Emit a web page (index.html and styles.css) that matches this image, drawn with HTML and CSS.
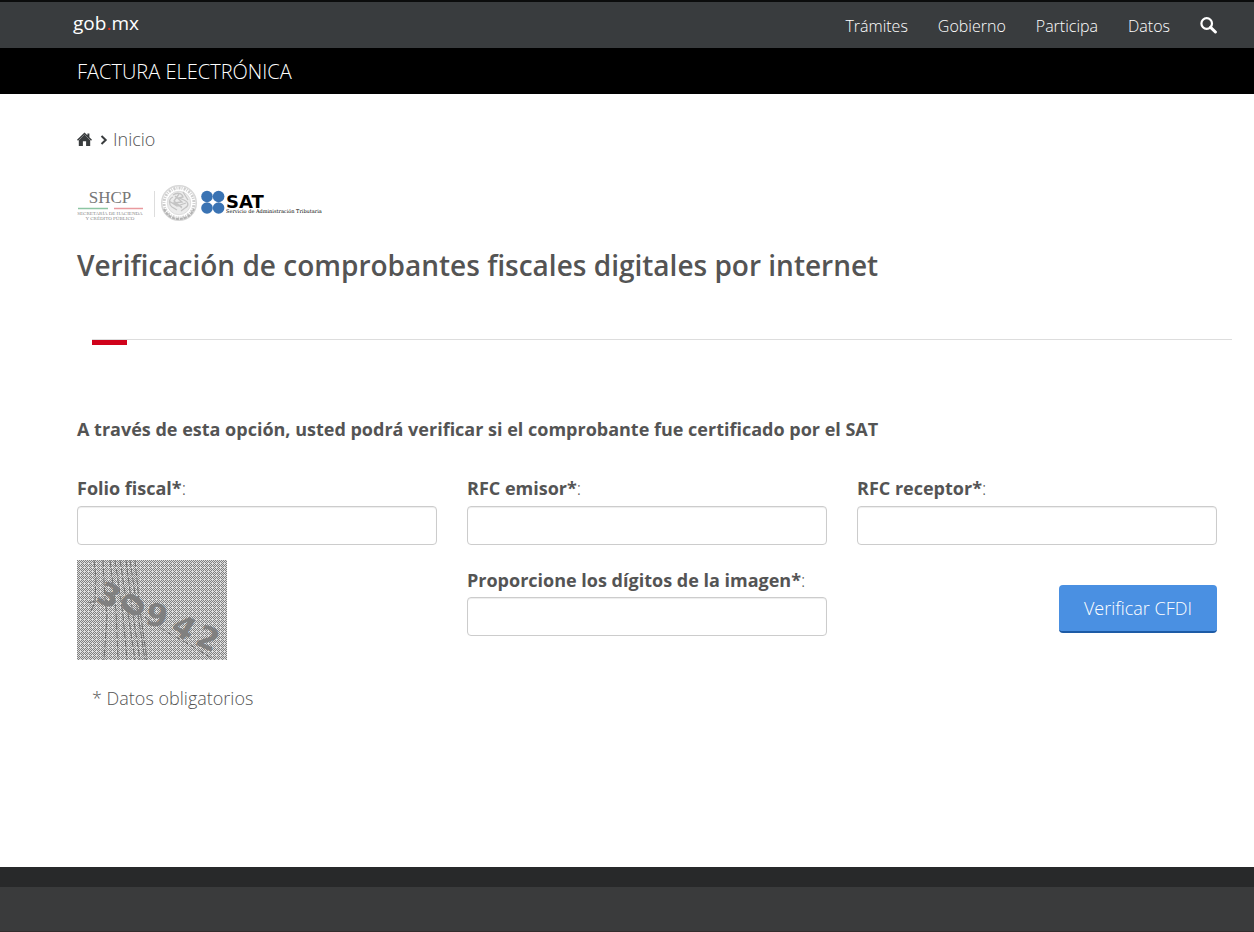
FILE: index.html
```html
<!DOCTYPE html>
<html lang="es">
<head>
<meta charset="utf-8">
<meta name="viewport" content="width=device-width, initial-scale=1">
<title>Verificación de comprobantes fiscales digitales por internet</title>
<link rel="stylesheet" href="styles.css">
</head>
<body>
<header>
  <div class="topbar container">
    <a class="brand" href="#">gob<span class="brand-dot">.</span>mx</a>
    <nav class="topnav">
      <a href="#">Trámites</a>
      <a href="#">Gobierno</a>
      <a href="#">Participa</a>
      <a href="#">Datos</a>
      <a class="search" href="#" aria-label="Buscar">
        <svg width="17" height="17" viewBox="0 0 17 17"><circle cx="6.7" cy="6.5" r="5.3" fill="none" stroke="#fff" stroke-width="2.2"/><path d="M10.6 10.4l4.8 4.6" stroke="#fff" stroke-width="3" stroke-linecap="round"/></svg>
      </a>
    </nav>
  </div>
  <div class="subbar container"><a href="#">FACTURA ELECTRÓNICA</a></div>
</header>

<main class="container">
  <nav class="breadcrumb">
    <a href="#" aria-label="Portada"><svg width="15" height="15" viewBox="0 0 15 15" fill="#393c3e"><path d="M7.500 .5L0 7.800l1 .9 6.500-6.200L14 8.700l1-.9-2.600-2.600V1.400h-2v1.900z"/><path d="M7.500 2.600L1.800 8.200V14h4.100V9.300h3.200V14h4.100V8.200z"/></svg></a>
    <svg class="chevron" width="8" height="10" viewBox="0 0 8 10"><path d="M1.500 1l4.200 4-4.200 4" fill="none" stroke="#393c3e" stroke-width="2"/></svg>
    <a href="#">Inicio</a>
  </nav>

  <svg class="logos" width="250" height="40" viewBox="0 0 250 40" role="img" aria-label="SHCP, SAT">
    <g class="shcp-text" text-anchor="middle">
      <text class="shcp-name" x="33" y="20">SHCP</text>
      <text class="shcp-sub" x="33" y="32">SECRETARÍA DE HACIENDA</text>
      <text class="shcp-sub" x="33" y="37">Y CRÉDITO PÚBLICO</text>
    </g>
    <path d="M1 25.500h30" stroke="#8dc5a3" stroke-width="1.500"/><path d="M37 25.500h29" stroke="#e99a9f" stroke-width="1.500"/>
    <path d="M77.500 8v26" stroke="#ddd"/>
    <g fill="none" stroke="#c4c4c4">
      <circle cx="102" cy="20" r="17.300" stroke="#d8d8d8" stroke-width="1.500"/>
      <circle cx="102" cy="20" r="15" stroke="#cfcfcf" stroke-width="3" stroke-dasharray="1 1.200 2 1"/>
      <circle cx="102" cy="20" r="11.700" fill="#ececec" stroke="#dedede"/>
      <path d="M96 12c4-3 9-2 10 2l-4 1 5 2c5 2 5 6 1 8l-4 3m-8-14c-5 2-4 8-1 10l5 3m-2-14l7 6-8 1 8 4m-3-13l-5 7 8 7m-13-7l8 5 9-3m-3-11l5 8" stroke-width="1.300"/>
      <path d="M87 26c3 7 9 10 15 10s12-3 15-10" stroke="#b4b4b4" stroke-width="2" stroke-dasharray="3 1"/>
    </g>
    <g fill="#3a73b3"><circle cx="130" cy="13.500" r="5.800"/><circle cx="141.600" cy="13.500" r="5.800"/><circle cx="130" cy="25" r="5.800"/><circle cx="141.600" cy="25" r="5.800"/></g>
    <text class="sat-name" x="149" y="25">SAT</text>
    <text class="sat-sub" x="149" y="30">Servicio de Administración Tributaria</text>
  </svg>

  <h1>Verificación de comprobantes fiscales digitales por internet</h1>
  <div class="rule"></div>

  <p class="lead">A través de esta opción, usted podrá verificar si el comprobante fue certificado por el SAT</p>

  <form>
    <div class="grid">
      <div class="field"><label for="folio"><b>Folio fiscal*</b>:</label><input id="folio" type="text"></div>
      <div class="field"><label for="emisor"><b>RFC emisor*</b>:</label><input id="emisor" type="text"></div>
      <div class="field"><label for="receptor"><b>RFC receptor*</b>:</label><input id="receptor" type="text"></div>

      <svg class="captcha" width="150" height="100" viewBox="0 0 150 100" role="img" aria-label="Imagen con dígitos">
        <defs><pattern id="dots" width="4" height="4" patternUnits="userSpaceOnUse"><path d="M0 0h1v1H0zM2 0h1v1H2zM1 1h1v1H1zM3 1h1v1H3zM0 2h1v1H0zM2 2h1v1H2zM1 3h1v1H1z" fill="#808080" shape-rendering="crispEdges"/></pattern></defs>
        <rect width="150" height="100" fill="#dedede"/>
        <rect width="150" height="100" fill="url(#dots)"/>
        <g fill="none" stroke="#707070" stroke-dasharray="7 2">
          <path d="M17 0l2 18-1 24-4 9M11 43l16-4 6 4M26 0l2 40 2 15-3 45M33 0l6 50 2 50M38 0l8 55 4 45M43 0l9 60 6 40M49 0l7 55 7 45M53 0l7 48 8 52M58 0l5 50 7 50"/>
          <path d="M68 57l20 14 20 11 30 18" stroke-dasharray="6 3"/>
        </g>
        <g class="captcha-digits" text-anchor="middle">
          <text transform="translate(32 35) rotate(24)">3</text>
          <text transform="translate(56 45) rotate(-50)">0</text>
          <text transform="translate(80 55) rotate(10)">9</text>
          <text transform="translate(107 67) rotate(30)">4</text>
          <text transform="translate(131 78) rotate(24)">2</text>
        </g>
      </svg>
      <div class="field digits"><label for="digitos"><b>Proporcione los dígitos de la imagen*</b>:</label><input id="digitos" type="text"></div>
      <button class="verify" type="button">Verificar CFDI</button>
    </div>
    <p class="note">* Datos obligatorios</p>
  </form>
</main>
<footer></footer>
</body>
</html>
```

FILE: styles.css
```css
* { box-sizing: border-box; }

body {
  margin: 0;
  min-height: 100vh;
  display: flex;
  flex-direction: column;
  background: #fff;
  color: #545454;
  font: 300 18px/26px "Open Sans", sans-serif;
}

a { color: inherit; text-decoration: none; }
b { font-weight: 700; }
svg { display: block; }

.container { padding-left: 77px; padding-right: 37px; }

.topbar {
  height: 48px;
  display: flex;
  justify-content: space-between;
  align-items: center;
  background: #393c3e;
  border-top: 2px solid #0b0c0c;
  color: #fff;
}

.brand {
  margin-left: -4px;
  padding-bottom: 4px;
  font-size: 19px;
  font-weight: 500;
}
.brand-dot { color: #e8311a; }

.topnav { display: flex; align-items: center; gap: 30px; font-size: 16px; padding-top: 2px; }
.search { padding-bottom: 2px; }

.subbar {
  height: 46px;
  display: flex;
  align-items: center;
  padding-top: 2px;
  background: #000;
  color: #fff;
  font-size: 20px;
}

main { flex: 1; }

.breadcrumb { display: flex; align-items: center; margin-top: 32px; }
.chevron { margin: 2px 5px 0 8px; }

.logos { margin-top: 31px; }
.shcp-text { font-family: "Liberation Serif", serif; fill: #777; }
.shcp-name { font-size: 17px; }
.shcp-sub { font-size: 5px; fill: #888; }
.sat-name { font: 700 18px "DejaVu Sans", sans-serif; fill: #000; }
.sat-sub { font: 400 5px "DejaVu Serif", serif; fill: #000; }

h1 { margin: 22px 0 0; font-size: 28px; line-height: 40px; font-weight: 600; }

.rule { margin: 54px -15px 0 15px; border-top: 1px solid #ddd; }
.rule::before { content: ""; display: block; width: 35px; height: 5px; background: #d0021b; }

.lead { margin: 71px 0 0; font-weight: 700; }

.grid {
  display: grid;
  grid-template-columns: repeat(3, 1fr);
  column-gap: 30px;
  row-gap: 15px;
  margin-top: 33px;
}
.field { display: flex; flex-direction: column; gap: 5px; }
.digits { padding-top: 7px; gap: 4px; }

input {
  width: 100%;
  height: 39px;
  padding: 6px 12px;
  border: 1px solid #ccc;
  border-radius: 4px;
  box-shadow: inset 0 1px 1px rgba(0, 0, 0, .075);
  background: #fff;
  font: inherit;
}

.captcha-digits { font: 700 31px "DejaVu Sans", sans-serif; fill: #808080; dominant-baseline: central; }

.verify {
  justify-self: end;
  align-self: start;
  margin-top: 25px;
  height: 48px;
  padding: 0 25px;
  border: 0;
  border-bottom: 2px solid #1d5ba6;
  border-radius: 4px;
  background: #4a90e2;
  color: #fff;
  font: inherit;
}

.note { margin: 25px 0 40px; padding-left: 15px; }

footer { height: 65px; background: #3a3b3c; border-top: 20px solid #28292a; border-bottom: 1px solid #332d2d; }
```
